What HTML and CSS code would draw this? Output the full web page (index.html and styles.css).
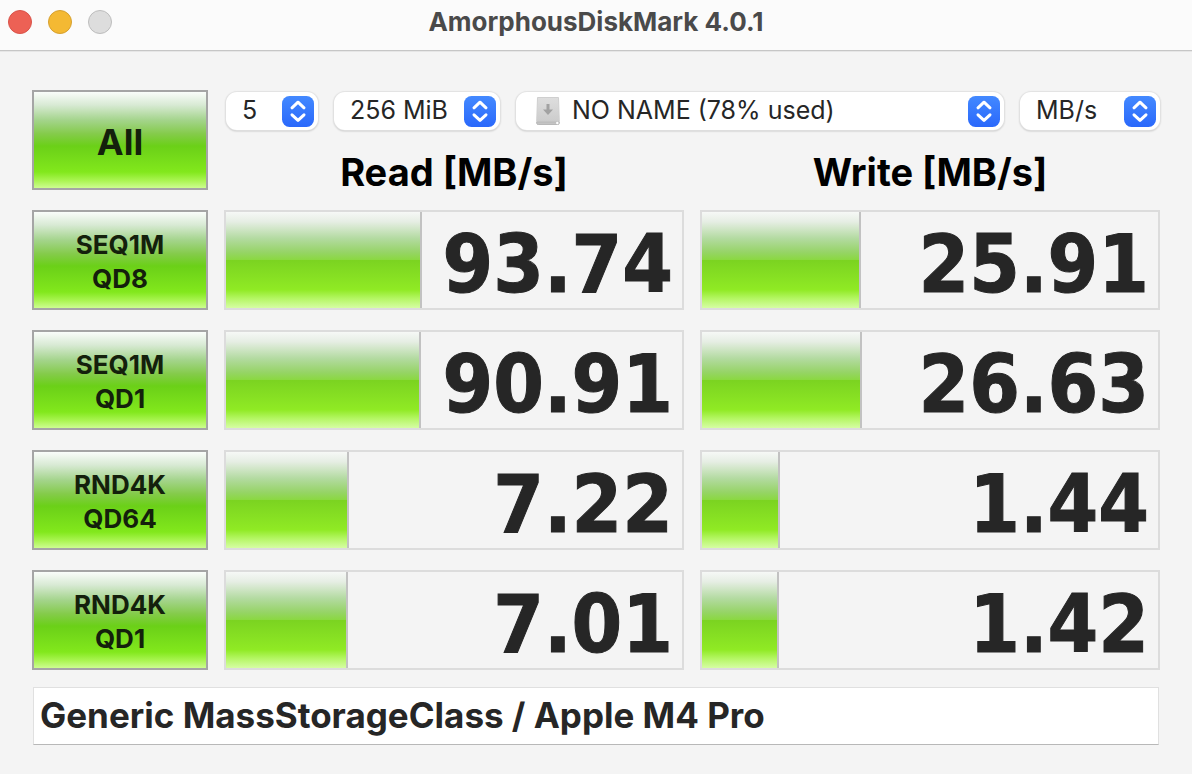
FILE: index.html
```html
<!DOCTYPE html>
<html lang="en">
<head>
<meta charset="utf-8">
<title>AmorphousDiskMark 4.0.1</title>
<link rel="stylesheet" href="styles.css">
</head>
<body>
<svg class="defs" aria-hidden="true">
  <defs>
    <linearGradient id="blue" x1="0" y1="0" x2="0" y2="1">
      <stop offset="0" stop-color="#4389ff"/><stop offset="1" stop-color="#2a68fb"/>
    </linearGradient>
    <linearGradient id="metal" x1="0" y1="0" x2="0" y2="1">
      <stop offset="0" stop-color="#dedede"/><stop offset="1" stop-color="#cccccc"/>
    </linearGradient>
    <symbol id="stepper" viewBox="0 0 32 31">
      <rect width="32" height="31" rx="7.500" fill="url(#blue)"/>
      <path d="M10 11.800L16 6.200l6 5.600M10 18.800L16 24.400l6-5.600" fill="none" stroke="#fff" stroke-width="3" stroke-linecap="round" stroke-linejoin="round"/>
    </symbol>
  </defs>
</svg>
<header class="titlebar">
  <div class="lights">
    <button class="light close" aria-label="Close"></button>
    <button class="light minimize" aria-label="Minimize"></button>
    <button class="light zoom" aria-label="Zoom" disabled></button>
  </div>
  <h1 class="title">AmorphousDiskMark 4.0.1</h1>
</header>
<main class="panel">
  <button class="run run-all">All</button>
  <div class="top">
    <div class="options">
      <div class="popup count">
        <select aria-label="Test count"><option>5</option></select>
        <svg class="stepper" aria-hidden="true"><use href="#stepper"/></svg>
      </div>
      <div class="popup size">
        <select aria-label="Test size"><option>256 MiB</option></select>
        <svg class="stepper" aria-hidden="true"><use href="#stepper"/></svg>
      </div>
      <div class="popup drive">
        <select aria-label="Drive"><option>NO NAME (78% used)</option></select>
        <svg class="disk" viewBox="0 0 24 28" aria-hidden="true">
          <path d="M1.500.5h21l.8 24H.7z" fill="url(#metal)" stroke="#cfcfcf"/>
          <path d="M.7 25h22.600v1q0 1.500-1.500 1.500H2.200Q.7 27.500.7 26z" fill="#c4c4c4" stroke="#b8b8b8"/>
          <path d="M10.500 7h3v5.500H17L12 18l-5-5.500h3.500z" fill="#a2a2a2"/>
          <circle cx="21.300" cy="26" r="1.200" fill="#fff"/>
        </svg>
        <svg class="stepper" aria-hidden="true"><use href="#stepper"/></svg>
      </div>
      <div class="popup unit">
        <select aria-label="Unit"><option>MB/s</option></select>
        <svg class="stepper" aria-hidden="true"><use href="#stepper"/></svg>
      </div>
    </div>
    <div class="headings">
      <h2>Read [MB/s]</h2>
      <h2>Write [MB/s]</h2>
    </div>
  </div>

  <button class="run">SEQ1M<br>QD8</button>
  <div class="result"><div class="fill" style="width:43%"></div><output>93.74</output></div>
  <div class="result"><div class="fill" style="width:34.9%"></div><output>25.91</output></div>

  <button class="run">SEQ1M<br>QD1</button>
  <div class="result"><div class="fill" style="width:42.8%"></div><output>90.91</output></div>
  <div class="result"><div class="fill" style="width:35%"></div><output>26.63</output></div>

  <button class="run">RND4K<br>QD64</button>
  <div class="result"><div class="fill" style="width:27%"></div><output>7.22</output></div>
  <div class="result"><div class="fill" style="width:17%"></div><output>1.44</output></div>

  <button class="run">RND4K<br>QD1</button>
  <div class="result"><div class="fill" style="width:26.8%"></div><output>7.01</output></div>
  <div class="result"><div class="fill" style="width:16.9%"></div><output>1.42</output></div>
</main>
<footer class="note">
  <input type="text" aria-label="Device description" value="Generic MassStorageClass / Apple M4 Pro">
</footer>
</body>
</html>
```

FILE: styles.css
```css
* {
  box-sizing: border-box;
}

body {
  margin: 0;
  min-height: 100vh;
  background: #f4f4f4;
  color: #262626;
  font-family: Inter, "Liberation Sans", sans-serif;
}

button,
select,
input {
  font: inherit;
  color: inherit;
}

.defs {
  position: absolute;
  width: 0;
  height: 0;
}

.titlebar {
  display: grid;
  grid-template-columns: 1fr auto 1fr;
  align-items: center;
  padding: 4px 8px 10px;
  background: #fbfbfb;
  border-bottom: 1px solid #c6c6c6;
  box-shadow: 0 1px 0 #e6e6e6;
}

.lights {
  display: flex;
  gap: 16px;
}

.light {
  width: 24px;
  height: 24px;
  padding: 0;
  border: 1px solid;
  border-radius: 50%;
}

.close {
  background: #ed6155;
  border-color: #d9534a;
}

.minimize {
  background: #f4b933;
  border-color: #d6a02f;
}

.zoom {
  background: #dddddd;
  border-color: #bdbdbd;
}

.title {
  margin: 0;
  font-size: 26px;
  line-height: 36px;
  font-weight: 700;
  color: #4a4a4a;
}

.panel {
  display: grid;
  grid-template-columns: 176px 1fr 1fr;
  grid-auto-rows: 100px;
  gap: 20px 16px;
  padding: 39px 32px 0;
}

.run {
  padding: 4px 0 0;
  border: 2px solid #a5a5a5;
  background: linear-gradient(#fafdfa 2%, #d8ead4 15%, #a4d48c 30%, #84cb4a 44%, #6bd018 56%, #82e81c 82%, #acf555 91%, #cdfd90 98%);
  background-origin: border-box;
  color: #14200c;
  font-size: 26px;
  line-height: 34px;
  font-weight: 700;
}

.run-all {
  font-size: 36px;
}

.top {
  grid-column: 2 / 4;
  display: flex;
  flex-direction: column;
  gap: 18px;
  padding-top: 2px;
}

.options {
  display: flex;
  gap: 16px;
  padding-left: 2px;
}

.popup {
  position: relative;
}

.count {
  width: 92px;
}

.size {
  width: 166px;
}

.drive {
  flex: 1;
}

.unit {
  width: 140px;
}

.popup select {
  display: block;
  appearance: none;
  width: 100%;
  height: 38px;
  padding: 0 44px 2px 16px;
  border: 0;
  border-radius: 11px;
  background: #fff;
  box-shadow: 0 0 1px 1px #e2e2e2, 0 1px 2px #a8a8a8;
  font-size: 25px;
}

.drive select {
  padding-left: 56px;
}

.stepper {
  position: absolute;
  top: 4px;
  right: 4px;
  width: 32px;
  height: 31px;
  pointer-events: none;
}

.disk {
  position: absolute;
  top: 5px;
  left: 20px;
  width: 24px;
  height: 28px;
  pointer-events: none;
}

.headings {
  display: grid;
  grid-template-columns: 1fr 1fr;
  gap: 16px;
}

.headings h2 {
  margin: 0;
  font-size: 38px;
  line-height: 48px;
  font-weight: 700;
  text-align: center;
  color: #000;
}

.result {
  position: relative;
  display: flex;
  align-items: flex-end;
  justify-content: flex-end;
  padding-right: 9px;
  border: 2px solid #dcdcdc;
}

.fill {
  position: absolute;
  top: 0;
  bottom: 0;
  left: 0;
  border-right: 2px solid #c2c2c2;
  background: linear-gradient(#f6f8f6 0%, #e6eee4 10%, #b2da9f 28%, #96d466 42%, #8ad840 50%, #7bd321 50%, #90ea24 81%, #b4f663 90%, #d6fda4 100%);
}

.result output {
  position: relative;
  font-family: "DejaVu Sans Condensed", "DejaVu Sans", sans-serif;
  font-size: 81px;
  line-height: 88px;
  font-weight: 700;
  -webkit-text-stroke: 1px #262626;
}

.note {
  padding: 17px 33px 28px;
}

.note input {
  display: block;
  width: 100%;
  height: 58px;
  padding: 0 6px 2px;
  border: 1px solid #e0e0e0;
  border-bottom-color: #b8b8b8;
  background: #fff;
  font-size: 35px;
  font-weight: 700;
}
```
